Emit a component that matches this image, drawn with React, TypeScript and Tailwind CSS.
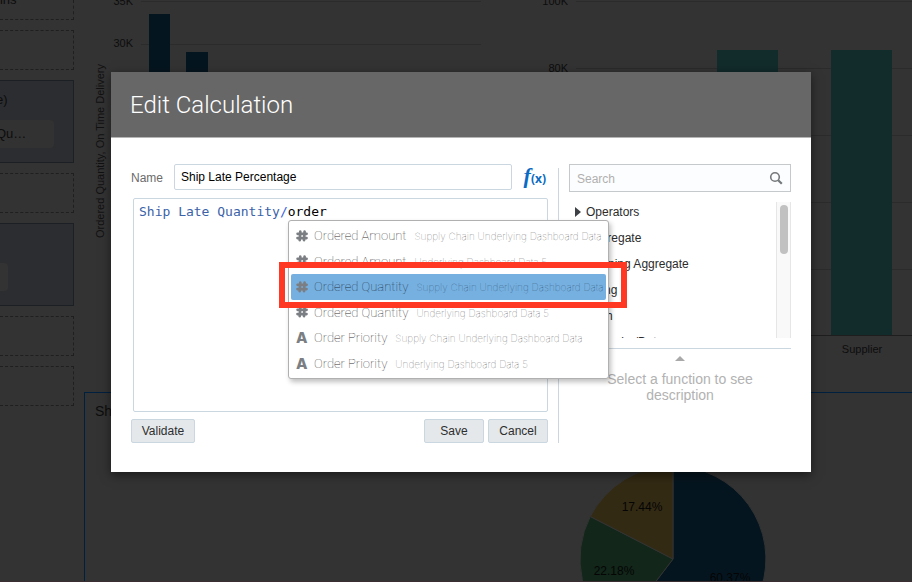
import React from "react";

type Suggestion = { kind: "number" | "text"; name: string; source: string };

const suggestions: Suggestion[] = [
  { kind: "number", name: "Ordered Amount", source: "Supply Chain Underlying Dashboard Data" },
  { kind: "number", name: "Ordered Amount", source: "Underlying Dashboard Data 5" },
  { kind: "number", name: "Ordered Quantity", source: "Supply Chain Underlying Dashboard Data" },
  { kind: "number", name: "Ordered Quantity", source: "Underlying Dashboard Data 5" },
  { kind: "text", name: "Order Priority", source: "Supply Chain Underlying Dashboard Data" },
  { kind: "text", name: "Order Priority", source: "Underlying Dashboard Data 5" },
];
const activeSuggestion = 2;

const functionGroups = ["Operators", "Aggregate", "Running Aggregate", "String", "Math", "Calendar/Date"];

function DropSlot({ first = false }: { first?: boolean }) {
  return (
    <div
      className={
        first
          ? "h-5 shrink-0 border-r border-b border-dashed border-[#1f1f1f] text-[13px] leading-none"
          : "h-10 shrink-0 border-y border-r border-dashed border-[#1f1f1f]"
      }
    >
      {first && <span className="-mt-[7px] -ml-2 block">mns</span>}
    </div>
  );
}

function Shelf({ title, chip, short = false }: { title?: string; chip?: string; short?: boolean }) {
  return (
    <div className="flex h-[83px] shrink-0 flex-col justify-between border-y border-r border-[#1c1f23] bg-[#2c2d31] pt-[11px] pb-[14px] text-[13px] leading-4">
      <span className="-ml-1">{title}</span>
      <div className={short ? "h-7 w-2 rounded-r-sm bg-[#333333]" : "h-7 w-[54px] rounded-r-sm bg-[#323232] leading-7"}>
        <span className="-ml-1">{chip}</span>
      </div>
    </div>
  );
}

function DeliveryChart() {
  return (
    <svg width="400" height="380" className="shrink-0" aria-label="Ordered Quantity, On Time Delivery">
      <g stroke="#2b2b2b">
        <path d="M57 1.5H397M57 44.5H397" />
      </g>
      <rect x="65" y="14" width="21" height="200" fill="#05151f" />
      <rect x="102" y="52" width="22" height="162" fill="#05151f" />
      <g fill="#0d0d0d" fontSize="11" textAnchor="end">
        <text x="49" y="5">35K</text>
        <text x="49" y="47">30K</text>
      </g>
      <text transform="translate(20 238) rotate(-90)" fill="#111111" fontSize="11">
        Ordered Quantity, On Time Delivery
      </text>
    </svg>
  );
}

function SupplierChart() {
  return (
    <svg width="428" height="380" className="shrink-0" aria-label="Supplier">
      <path d="M92 1.5H428M92 68.5H428M92 135.5H428M92 202.5H428M92 269.5H428" stroke="#2b2b2b" />
      <rect x="233" y="50" width="61" height="285" fill="#122b2b" />
      <rect x="347" y="50" width="61" height="285" fill="#122b2b" />
      <path d="M92 335.5H428" stroke="#1e1e1e" />
      <g fill="#0d0d0d" fontSize="11">
        <text x="84" y="5" textAnchor="end">100K</text>
        <text x="84" y="72" textAnchor="end">80K</text>
        <text x="378" y="353" textAnchor="middle">Supplier</text>
      </g>
    </svg>
  );
}

function SharePie() {
  return (
    <svg width="190" height="190" viewBox="-95 -95 190 190" className="shrink-0" aria-label="Share by supplier">
      <g stroke="#333333" strokeWidth="1">
        <path d="M0 0V-93A93 93 0 1 1 -56.4 74Z" fill="#05151f" />
        <path d="M0 0L-56.4 74A93 93 0 0 1 -82.7 -42.5Z" fill="#12261a" />
        <path d="M0 0L-82.7 -42.5A93 93 0 0 1 0 -93Z" fill="#332a14" />
      </g>
      <g fill="#050505" fontSize="12" textAnchor="middle">
        <text x="-31" y="-48">17.44%</text>
        <text x="-59" y="16">22.18%</text>
        <text x="57" y="23">60.37%</text>
      </g>
    </svg>
  );
}

function HashIcon() {
  return (
    <svg width="12" height="12" viewBox="0 0 12 12" fill="none" stroke="#7b7f83" strokeWidth="2.7" strokeLinecap="round">
      <path d="M4.3 1.6L3.7 10.2M8.6 1.6L8 10.2M1.6 3.8H10.6M1.5 8.1H10.5" />
    </svg>
  );
}

function SuggestionList() {
  return (
    <ul
      role="listbox"
      aria-label="Suggestions"
      className="absolute top-[21px] left-[154px] grid h-[159px] w-[321px] grid-cols-1 grid-rows-6 rounded-[3px] border border-[#b0b0b0] bg-white p-[2px] shadow-[2px_3px_5px_rgba(0,0,0,0.25)]"
    >
      {suggestions.map((s, i) => {
        const active = i === activeSuggestion;
        return (
          <li
            key={s.name + s.source}
            role="option"
            aria-selected={active}
            className={
              active
                ? "flex items-center rounded-[2px] bg-[#76b0e0] pl-[5px] whitespace-nowrap"
                : "flex items-center pl-[5px] whitespace-nowrap"
            }
          >
            <span className="flex w-[18px] shrink-0 items-center font-['Inter',sans-serif] text-[15px] leading-none font-extrabold text-[#7b7f83]">
              {s.kind === "number" ? <HashIcon /> : "A"}
            </span>
            <span
              className={
                active
                  ? "font-['Roboto',sans-serif] text-[13px] font-thin text-[#1f3347]"
                  : "font-['Roboto',sans-serif] text-[13px] font-thin text-[#333333]"
              }
            >
              {s.name}
            </span>
            <span
              className={
                active
                  ? "pt-[2px] pl-2 font-['Inter',sans-serif] text-[10px] font-thin text-[#34597a]"
                  : "pt-[2px] pl-2 font-['Inter',sans-serif] text-[10px] font-thin text-[#666666]"
              }
            >
              {s.source}
            </span>
          </li>
        );
      })}
    </ul>
  );
}

function FormulaEditor() {
  return (
    <div className="relative mt-2 ml-[2px] h-[214px] rounded-[2px] border border-[#cbd7e0]">
      <div
        role="textbox"
        aria-label="Expression"
        aria-multiline="true"
        contentEditable
        suppressContentEditableWarning
        className="h-full px-[5px] pt-[5px] font-['DejaVu_Sans_Mono',monospace] text-[13px] leading-4 text-black outline-none"
      >
        <span className="text-[#3a62a8]">Ship Late Quantity</span>
        <span className="text-[#3b62dd]">/</span>
        <span>order</span>
      </div>
      <SuggestionList />
      <div className="pointer-events-none absolute top-[63px] left-[145px] h-[46px] w-[348px] border-[6px] border-[#ff3823]" />
    </div>
  );
}

const buttonClass =
  "h-6 rounded-[2px] border border-[#cbd7e0] bg-[#e4e8ea] text-center text-[12px] leading-none text-[#2e2e2e]";

function FunctionBrowser() {
  return (
    <section className="flex min-w-0 flex-1 flex-col">
      <div className="flex h-7 items-center border border-[#c6c9cc] bg-[#fcfdfe] pr-[7px] pl-[7px]">
        <input
          type="search"
          aria-label="Search functions"
          placeholder="Search"
          className="min-w-0 flex-1 bg-transparent pt-[2px] text-[12px] outline-none placeholder:text-[#b0b0b0]"
        />
        <svg width="14" height="14" viewBox="0 0 14 14" fill="none" stroke="#75787b">
          <circle cx="6" cy="6" r="4.3" strokeWidth="1.6" />
          <path d="M9.2 9.2L12.8 12.8" strokeWidth="2.2" />
        </svg>
      </div>
      <div className="mt-[10px] flex h-[136px] overflow-hidden">
        <ul className="flex flex-1 flex-col gap-2 pt-px pl-[6px] text-[12px] leading-[18px] text-[#2b2b2b]">
          {functionGroups.map((group) => (
            <li key={group} className="flex h-[18px] shrink-0 items-center">
              <svg width="6" height="10" viewBox="0 0 6 10" className="mr-[5px] shrink-0" fill="#3d4145">
                <path d="M0 0L6 5L0 10Z" />
              </svg>
              {group}
            </li>
          ))}
        </ul>
        <div className="w-[15px] border-x border-[#e6e6e6] bg-[#f9f9f9] px-[3px] pt-[3px]">
          <div className="h-[49px] w-2 rounded-full bg-[#c1c1c1]" />
        </div>
      </div>
      <div className="mt-[10px] flex flex-col items-center border-t border-[#cbd7e0] pt-[7px]">
        <svg width="10" height="5" viewBox="0 0 10 5" fill="#a9a9a9">
          <path d="M0 5L5 0L10 5Z" />
        </svg>
        <p className="mt-[10px] px-6 text-center text-[14px] leading-4 text-[#b2b2b2]">Select a function to see description</p>
      </div>
    </section>
  );
}

function CalculationDialog() {
  return (
    <div
      role="dialog"
      aria-labelledby="dialog-title"
      className="h-[400px] w-[700px] shrink-0 bg-white shadow-[0_3px_10px_rgba(0,0,0,0.5)]"
    >
      <header className="flex h-[66px] items-center border-b border-[#b5b5b5] bg-[#676767] pl-[19px]">
        <h1 id="dialog-title" className="font-['Roboto',sans-serif] text-[24px] leading-8 font-light text-white">
          Edit Calculation
        </h1>
      </header>
      <div className="flex px-5 pt-[26px]">
        <form className="w-[417px] shrink-0" onSubmit={(e) => e.preventDefault()}>
          <div className="flex h-[26px] items-center">
            <label htmlFor="calc-name" className="w-[43px] pt-[2px] text-[12px] text-[#6b6b6b]">
              Name
            </label>
            <input
              id="calc-name"
              type="text"
              defaultValue="Ship Late Percentage"
              className="h-[26px] min-w-0 flex-1 rounded-[2px] border border-[#cbd7e0] px-[6px] text-[12px] text-black outline-none"
            />
            <button type="button" aria-label="Functions" className="flex w-9 items-baseline justify-end pr-[2px] pb-[2px] text-[#0a6bc4]">
              <span className="font-['Liberation_Serif',serif] text-[22px] leading-6 font-bold italic">f</span>
              <span className="font-['Open_Sans',sans-serif] text-[12px] font-bold">(x)</span>
            </button>
          </div>
          <FormulaEditor />
          <div className="mt-[7px] flex gap-1">
            <button type="button" className={`${buttonClass} w-16`}>Validate</button>
            <button type="submit" className={`${buttonClass} ml-auto w-[60px]`}>Save</button>
            <button type="button" className={`${buttonClass} w-[60px]`}>Cancel</button>
          </div>
        </form>
        <div className="mx-[10px] mt-1 w-px shrink-0 bg-[#cbd7e0]" />
        <FunctionBrowser />
      </div>
    </div>
  );
}

export default function App() {
  return (
    <div className="relative h-screen overflow-hidden border-b border-[#3a2e33] bg-[#333333] font-['Liberation_Sans',Arial,sans-serif] text-[#0d0d0d]">
      <div className="flex h-full">
        <aside className="flex w-[74px] shrink-0 flex-col gap-[10px]">
          <DropSlot first />
          <DropSlot />
          <Shelf title="e)" chip="Qu…" />
          <DropSlot />
          <Shelf short />
          <DropSlot />
          <DropSlot />
        </aside>
        <main className="ml-[10px] flex min-w-0 flex-1 flex-col">
          <div className="flex h-[392px] shrink-0">
            <DeliveryChart />
            <SupplierChart />
          </div>
          <section className="flex flex-1 items-start overflow-hidden border-t border-l border-[#00203f] pt-[10px] pl-[10px]">
            <h2 className="w-[483px] text-[14px] leading-4">Ship</h2>
            <div className="mt-[61px]">
              <SharePie />
            </div>
          </section>
        </main>
      </div>
      <div className="absolute inset-0 flex items-start justify-center overflow-hidden pt-[72px] pl-[10px]">
        <CalculationDialog />
      </div>
    </div>
  );
}
